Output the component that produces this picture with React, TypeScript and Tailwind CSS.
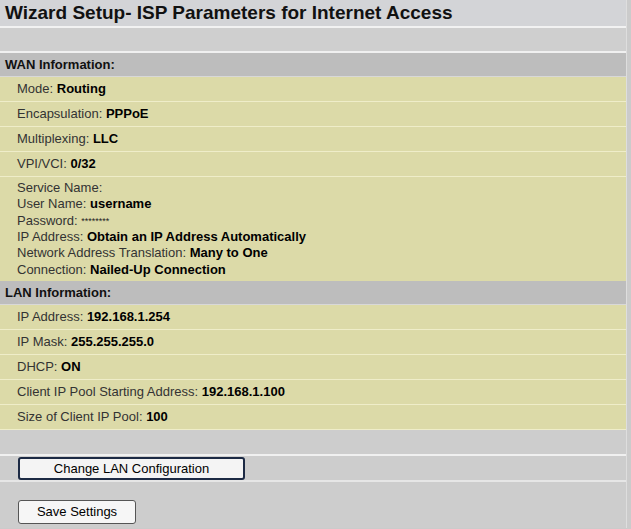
const wanRows: [string, string][] = [
  ['Mode:', 'Routing'],
  ['Encapsulation:', 'PPPoE'],
  ['Multiplexing:', 'LLC'],
  ['VPI/VCI:', '0/32'],
];

const wanDetails: [string, string][] = [
  ['Service Name:', ''],
  ['User Name:', 'username'],
  ['Password:', '********'],
  ['IP Address:', 'Obtain an IP Address Automatically'],
  ['Network Address Translation:', 'Many to One'],
  ['Connection:', 'Nailed-Up Connection'],
];

const lanRows: [string, string][] = [
  ['IP Address:', '192.168.1.254'],
  ['IP Mask:', '255.255.255.0'],
  ['DHCP:', 'ON'],
  ['Client IP Pool Starting Address:', '192.168.1.100'],
  ['Size of Client IP Pool:', '100'],
];

function Field({ label, value }: { label: string; value: string }) {
  const isPassword = label === 'Password:';
  return (
    <span>
      <span className="text-[#333]">{label}</span>{' '}
      {isPassword ? (
        <span className="text-[9px] align-top text-[#222]">{value}</span>
      ) : (
        <span className="font-bold text-black">{value}</span>
      )}
    </span>
  );
}

function InfoRow({ label, value }: { label: string; value: string }) {
  return (
    <div className="h-[25px] flex items-center pl-[17px] bg-[#dcdaa8] border-b border-[#efedc9]">
      <Field label={label} value={value} />
    </div>
  );
}

function SectionHeader({ title }: { title: string }) {
  return (
    <div className="h-[24px] flex items-center pl-[5px] bg-[#bdbdbd] font-bold text-[#111] border-b border-[#d8d8d8]">
      {title}
    </div>
  );
}

export default function App() {
  return (
    <div
      className="w-[631px] h-[529px] overflow-hidden bg-[#cbcbcb] text-[13px]"
      style={{ fontFamily: '"Liberation Sans", Arial, sans-serif' }}
    >
      <div className="w-[627px] border-r border-[#dedede]">
        <div className="h-[28px] flex items-center pl-[5px] bg-[#d3d4d7] border-b-2 border-[#f2f2f2]">
          <h1 className="text-[19px] font-bold text-[#111]">
            Wizard Setup- ISP Parameters for Internet Access
          </h1>
        </div>
        <div className="h-[25px] bg-[#cfcfcf] border-b-2 border-[#f0f0f0]" />

        <SectionHeader title="WAN Information:" />
        {wanRows.map(([l, v]) => (
          <InfoRow key={l} label={l} value={v} />
        ))}
        <div className="h-[104px] flex flex-col justify-center pl-[17px] bg-[#dcdaa8] leading-[16.4px]">
          {wanDetails.map(([l, v]) => (
            <Field key={l} label={l} value={v} />
          ))}
        </div>

        <SectionHeader title="LAN Information:" />
        {lanRows.map(([l, v]) => (
          <InfoRow key={l} label={l} value={v} />
        ))}

        <div className="h-[26px] bg-[#cdcdcd] border-b-2 border-[#f0f0f0]" />
        <div className="h-[26px] flex items-center pl-[18px] bg-[#cdcdcd] border-b-2 border-[#e6e6e6]">
          <button className="w-[227px] h-[23px] bg-[#f4f4f4] border-2 border-[#1c2a44] rounded-[3px] text-[13px] text-black">
            Change LAN Configuration
          </button>
        </div>
        <div className="h-[46px] flex items-end pb-[4px] pl-[18px] bg-[#cdcdcd]">
          <button className="w-[118px] h-[24px] bg-[#f6f6f6] border border-[#555] rounded-[3px] text-[13px] text-black">
            Save Settings
          </button>
        </div>
      </div>
    </div>
  );
}
